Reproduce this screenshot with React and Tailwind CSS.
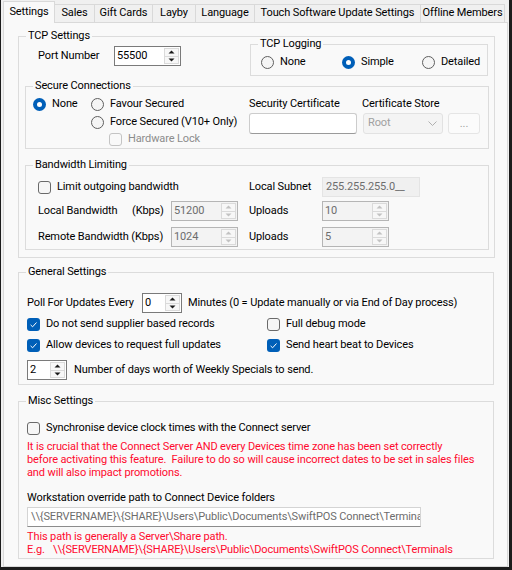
import { Fragment } from 'react';

const tabs = [
  { name: 'Settings', w: 'w-[52px]', active: true },
  { name: 'Sales', w: 'w-[40px]' },
  { name: 'Gift Cards', w: 'w-[58px]' },
  { name: 'Layby', w: 'w-[43px]' },
  { name: 'Language', w: 'w-[59px]' },
  { name: 'Touch Software Update Settings', w: 'w-[166px]' },
  { name: 'Offline Members', w: 'w-[84px]' },
];

const SHARE_PATH = '\\\\{SERVERNAME}\\{SHARE}\\Users\\Public\\Documents\\SwiftPOS Connect\\Terminals';

function GroupBox({ title, className = '', children }) {
  return (
    <fieldset className={`border border-[#dcdcdc] ${className}`}>
      <legend className="ml-[7px] px-[2px] leading-[16px]">{title}</legend>
      {children}
    </fieldset>
  );
}

function Radio({ checked, label, className = '' }) {
  return (
    <div className={`flex items-center h-[16px] gap-[6px] ${className}`}>
      {checked ? (
        <span className="flex items-center justify-center w-[13px] h-[13px] rounded-full bg-[#005fb8]">
          <span className="w-[5px] h-[5px] rounded-full bg-white" />
        </span>
      ) : (
        <span className="w-[13px] h-[13px] rounded-full border border-[#5f5f5f] bg-[#f5f5f5]" />
      )}
      <span>{label}</span>
    </div>
  );
}

function Check({ checked, disabled, label, className = '' }) {
  let box = 'border border-[#6a6a6a] bg-[#f6f6f6]';
  if (disabled) box = 'border border-[#c4c4c4] bg-[#f9f9f9]';
  if (checked) box = 'bg-[#005fb8]';
  return (
    <div className={`flex items-center h-[16px] gap-[6px] ${className}`}>
      <span className={`flex items-center justify-center w-[13px] h-[13px] rounded-[3px] ${box}`}>
        {checked && (
          <svg width="13" height="13" viewBox="0 0 13 13">
            <path d="M3.6 6.9 5.6 8.8 9.5 4.5" fill="none" stroke="#fff" strokeWidth="1" />
          </svg>
        )}
      </span>
      <span className={disabled ? 'text-[#8c8c8c]' : ''}>{label}</span>
    </div>
  );
}

function Arrow({ up, color }) {
  return (
    <svg width="7" height="4" viewBox="0 0 7 4">
      <path d={up ? 'M0.5 3.5 3.5 0.5 6.5 3.5Z' : 'M0.5 0.5 3.5 3.5 6.5 0.5Z'} fill={color} />
    </svg>
  );
}

function Spin({ value, disabled, className = '' }) {
  const arrow = disabled ? '#c2c2c2' : '#1a1a1a';
  return (
    <div
      className={`flex h-[20px] border ${
        disabled ? 'border-[#b5b5b5] bg-[#f3f3f3] text-[#6d6d6d]' : 'border-[#7a7a7a] bg-white'
      } ${className}`}
    >
      <span className="flex-1 pl-[2px] leading-[18px]">{value}</span>
      <div className="flex flex-col w-[15px] my-[1px] mr-[1px]">
        <div className="flex-1 flex items-center justify-center border border-[#dadada] bg-[#f7f7f7]">
          <Arrow up color={arrow} />
        </div>
        <div className="flex-1 flex items-center justify-center border border-t-0 border-[#dadada] bg-[#f7f7f7]">
          <Arrow color={arrow} />
        </div>
      </div>
    </div>
  );
}

export default function App() {
  return (
    <div className="w-[512px] h-[570px] overflow-hidden whitespace-nowrap bg-[#f0f0f0] border-l border-r-[3px] border-b-[3px] border-[#1c1c1c] pl-[2px] pt-[1px] text-[11px] tracking-[-0.12px] text-black font-['Roboto',sans-serif]">
      {/* tab strip */}
      <div className="flex items-end h-[21px]">
        {tabs.map((t) =>
          t.active ? (
            <div
              key={t.name}
              className={`${t.w} relative z-10 h-[22px] -mb-px flex items-center justify-center border border-b-0 border-[#d9d9d9] bg-[#f9f9f9]`}
            >
              {t.name}
            </div>
          ) : (
            <div
              key={t.name}
              className={`${t.w} h-[18px] flex items-center justify-center border-t border-r border-[#d9d9d9] bg-[#f0f0f0]`}
            >
              {t.name}
            </div>
          )
        )}
      </div>

      {/* settings page */}
      <div className="w-[505px] h-[545px] border border-[#d9d9d9] bg-[#f9f9f9]">
        <GroupBox title="TCP Settings" className="ml-[14px] mt-[5px] w-[477px] h-[230px]">
          <div className="flex items-start">
            <div className="flex items-center mt-[2px] ml-[19px]">
              <span className="w-[76px]">Port Number</span>
              <Spin value="55500" className="w-[67px]" />
            </div>
            <GroupBox title="TCP Logging" className="ml-[69px] -mt-[8px] w-[238px] h-[40px]">
              <div className="flex items-center pl-[10px] pt-[2px]">
                <Radio label="None" className="w-[81px]" />
                <Radio checked label="Simple" className="w-[80px]" />
                <Radio label="Detailed" />
              </div>
            </GroupBox>
          </div>

          <GroupBox title="Secure Connections" className="ml-[6px] mt-[2px] w-[464px] h-[71px]">
            <div className="flex pt-[2px]">
              <div className="ml-[7px] w-[58px]">
                <Radio checked label="None" />
              </div>
              <div className="w-[158px] flex flex-col">
                <Radio label="Favour Secured" />
                <Radio label="Force Secured (V10+ Only)" className="mt-[2px]" />
                <Check disabled label="Hardware Lock" className="ml-[18px] mt-[1px]" />
              </div>
              <div className="w-[113px]">
                <div className="leading-[16px]">Security Certificate</div>
                <div className="mt-[1px] w-[108px] h-[21px] rounded-[3px] border border-[#cccccc] border-b-[#9a9a9a] bg-white" />
              </div>
              <div>
                <div className="leading-[16px]">Certificate Store</div>
                <div className="flex mt-[1px]">
                  <div className="ml-[1px] w-[80px] h-[21px] flex items-center justify-between pl-[4px] pr-[5px] rounded-[3px] border border-[#e2e2e2] bg-[#f4f4f4] text-[#a0a0a0]">
                    <span>Root</span>
                    <svg width="9" height="5" viewBox="0 0 9 5">
                      <path d="M0.5 0.5 4.5 4.5 8.5 0.5" fill="none" stroke="#a8a8a8" strokeWidth="0.9" />
                    </svg>
                  </div>
                  <div className="ml-[5px] w-[32px] h-[21px] flex items-center justify-center rounded-[3px] border border-[#e5e5e5] bg-[#fbfbfb] text-[#a0a0a0] leading-[10px]">
                    ...
                  </div>
                </div>
              </div>
            </div>
          </GroupBox>

          <GroupBox title="Bandwidth Limiting" className="ml-[6px] mt-[8px] w-[464px] h-[93px]">
            <div className="flex items-center h-[20px] mt-[4px] ml-[12px]">
              <Check label="Limit outgoing bandwidth" className="w-[211px]" />
              <span className="w-[73px]">Local Subnet</span>
              <div className="w-[98px] h-[20px] pl-[3px] leading-[18px] border border-[#e4e4e4] bg-[#f0f0f0] text-[#6d6d6d]">
                255.255.255.0__
              </div>
            </div>
            <div className="flex items-center h-[20px] mt-[4px] ml-[12px]">
              <span className="w-[94px]">Local Bandwidth</span>
              <span className="w-[39px]">(Kbps)</span>
              <Spin disabled value="51200" className="w-[67px]" />
              <span className="ml-[11px] w-[73px]">Uploads</span>
              <Spin disabled value="10" className="w-[67px]" />
            </div>
            <div className="flex items-center h-[20px] mt-[6px] ml-[12px]">
              <span className="w-[133px]">Remote Bandwidth (Kbps)</span>
              <Spin disabled value="1024" className="w-[67px]" />
              <span className="ml-[11px] w-[73px]">Uploads</span>
              <Spin disabled value="5" className="w-[67px]" />
            </div>
          </GroupBox>
        </GroupBox>

        <GroupBox title="General Settings" className="ml-[14px] mt-[6px] w-[476px] h-[121px]">
          <div className="pl-[8px]">
            <div className="flex items-center h-[20px] mt-[13px]">
              <span className="w-[115px]">Poll For Updates Every</span>
              <Spin value="0" className="w-[40px]" />
              <span className="ml-[6px]">Minutes (0 = Update manually or via End of Day process)</span>
            </div>
            <div className="flex items-center h-[20px] mt-[1px]">
              <Check checked label="Do not send supplier based records" className="w-[240px]" />
              <Check label="Full debug mode" />
            </div>
            <div className="flex items-center h-[20px] mt-[1px]">
              <Check checked label="Allow devices to request full updates" className="w-[240px]" />
              <Check checked label="Send heart beat to Devices" />
            </div>
            <div className="flex items-center h-[20px] mt-[5px]">
              <Spin value="2" className="w-[40px]" />
              <span className="ml-[7px]">Number of days worth of Weekly Specials to send.</span>
            </div>
          </div>
        </GroupBox>

        <GroupBox title="Misc Settings" className="ml-[14px] mt-[8px] w-[476px] h-[166px]">
          <div className="pl-[8px]">
            <div className="flex items-center h-[20px] mt-[9px]">
              <Check label="Synchronise device clock times with the Connect server" />
            </div>
            <p className="mt-[2px] leading-[13px] text-[#ff0a2e] whitespace-pre">
              {[
                'It is crucial that the Connect Server AND every Devices time zone has been set correctly',
                'before activating this feature.  Failure to do so will cause incorrect dates to be set in sales files',
                'and will also impact promotions.',
              ].map((line, i) => (
                <Fragment key={i}>
                  {i > 0 && <br />}
                  {line}
                </Fragment>
              ))}
            </p>
            <div className="mt-[11px] leading-[16px]">Workstation override path to Connect Device folders</div>
            <div className="mt-[1px] w-[394px] h-[20px] pl-[3px] overflow-hidden leading-[18px] border border-[#d4d4d4] border-b-[#8c8c8c] bg-white text-[#6d6d6d]">
              {SHARE_PATH}
            </div>
            <p className="mt-[3px] leading-[13px] text-[#ff0a2e]">
              This path is generally a Server\Share path.
              <br />
              <span className="inline-block w-[26px]">E.g.</span>
              {SHARE_PATH}
            </p>
          </div>
        </GroupBox>
      </div>
    </div>
  );
}
